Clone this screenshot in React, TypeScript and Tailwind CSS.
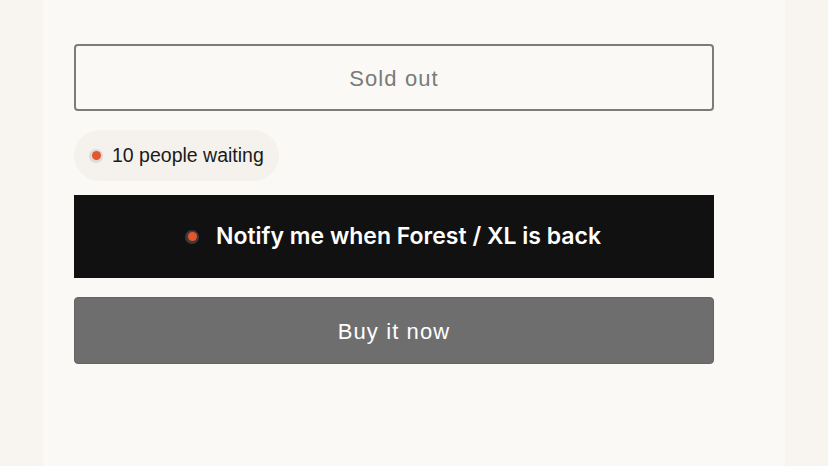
import React from "react";

const Dot = ({ ring }: { ring: string }) => (
  <span className={`flex h-[14px] w-[14px] items-center justify-center rounded-full ${ring}`}>
    <span className="h-[9px] w-[9px] rounded-full bg-[#e4572e]" />
  </span>
);

export default function App() {
  return (
    <div className="flex h-[466px] w-full justify-center bg-[#f8f5f1] font-['Liberation_Sans',Arial,sans-serif]">
      <div className="w-[742px] bg-[#faf9f6] pl-[31px] pt-[44px]">
        <div className="flex w-[640px] flex-col">
          {/* Sold out */}
          <button className="flex h-[67px] items-center justify-center rounded-[4px] border-2 border-[#7c7c7c] pt-[1px] text-[22px] tracking-[0.05em] text-[#7a7a7a]">
            Sold out
          </button>

          {/* waiting pill */}
          <div className="mt-[19px] flex h-[51px] w-[205px] items-center gap-[9px] rounded-full bg-[#f5f2ee] pl-[15px]">
            <Dot ring="bg-[#dcdad8]" />
            <span className="text-[19.5px] text-[#1a1a1a]">10 people waiting</span>
          </div>

          {/* notify */}
          <button className="mt-[14px] flex h-[83px] items-center justify-center gap-[17px] bg-[#111111] pr-[2px]">
            <Dot ring="bg-[#3a3a3a]" />
            <span className="font-['Inter',sans-serif] text-[23px] font-semibold text-white">
              Notify me when Forest / XL is back
            </span>
          </button>

          {/* buy now */}
          <button className="mt-[19px] flex h-[67px] items-center justify-center rounded-[4px] border border-[#646464] bg-[#6e6e6e] pt-[1px] text-[22px] tracking-[0.05em] text-white">
            Buy it now
          </button>
        </div>
      </div>
    </div>
  );
}
